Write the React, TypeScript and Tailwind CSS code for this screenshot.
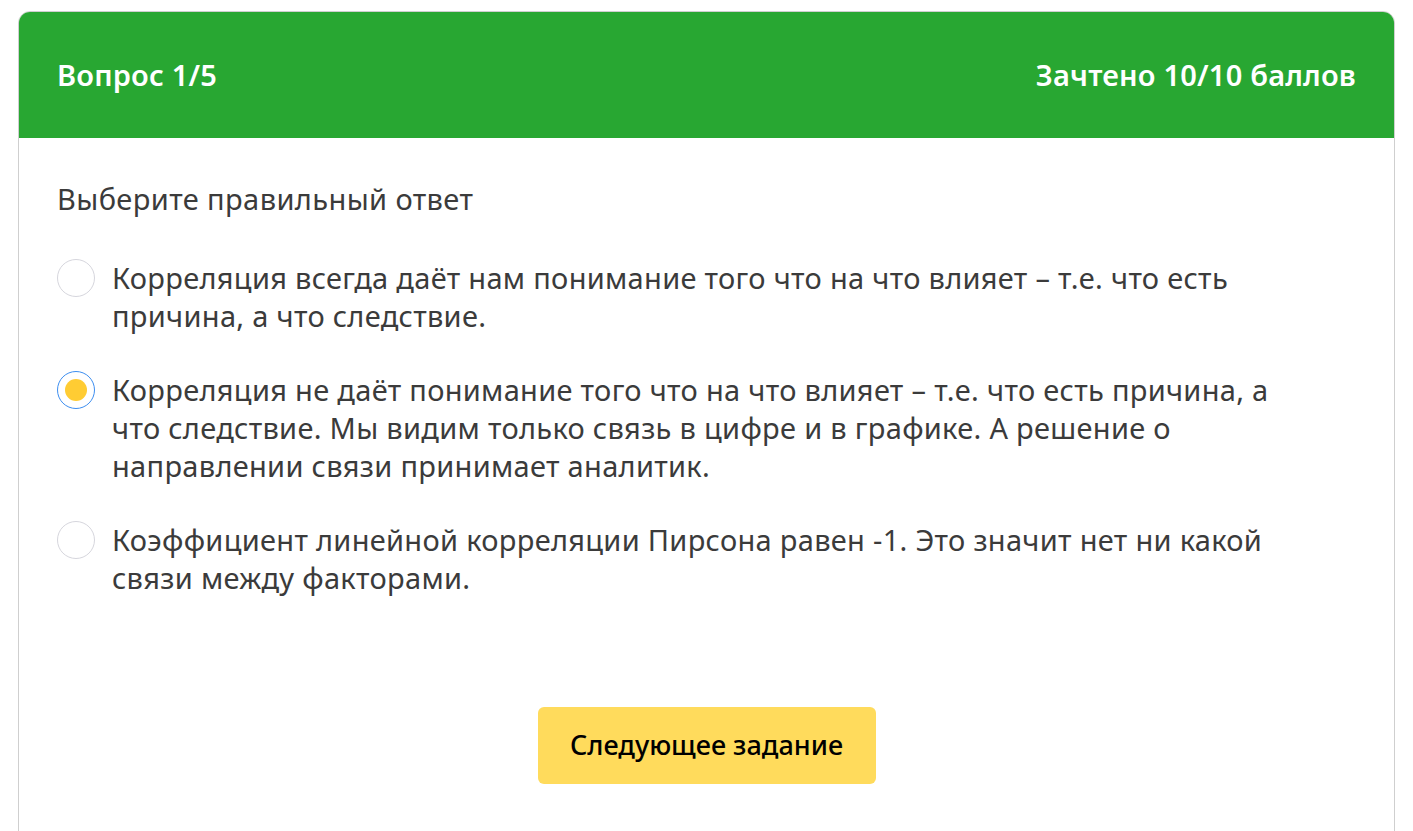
import React from "react";

const options = [
  "Корреляция всегда даёт нам понимание того что на что влияет – т.е. что есть причина, а что следствие.",
  "Корреляция не даёт понимание того что на что влияет – т.е. что есть причина, а что следствие. Мы видим только связь в цифре и в графике. А решение о направлении связи принимает аналитик.",
  "Коэффициент линейной корреляции Пирсона равен -1. Это значит нет ни какой связи между факторами.",
];

export default function App() {
  return (
    <div className="min-h-screen bg-white px-[18px] pt-[11px]" style={{ fontFamily: '"Noto Sans", "Open Sans", sans-serif' }}>
      <div className="rounded-t-[12px] border border-[#cfcfcf] overflow-hidden h-[840px]">
        <div className="h-[126px] bg-[#28a732] flex items-center justify-between px-[38px] text-white text-[29px] tracking-[0.2px] font-semibold">
          <span>Вопрос 1/5</span>
          <span>Зачтено 10/10 баллов</span>
        </div>
        <div className="px-[38px] pt-[43px]">
          <div className="text-[29px] leading-[36px] tracking-[0.4px] text-[#3b3b3b]">Выберите правильный ответ</div>
          <div className="mt-[42px] flex flex-col gap-[36px]">
            {options.map((t, i) => (
              <div key={i} className="flex items-start gap-[17px]">
                <div
                  className={
                    "w-[38px] h-[38px] shrink-0 rounded-full flex items-center justify-center bg-white " +
                    (i === 1 ? "border border-[#3d8ef0]" : "border border-[#d6d6dd]")
                  }
                >
                  {i === 1 && <div className="w-[22px] h-[22px] rounded-full bg-[#ffcc33]" />}
                </div>
                <div className="text-[29px] leading-[38px] tracking-[0.3px] text-[#3b3b3b] max-w-[1180px]">{t}</div>
              </div>
            ))}
          </div>
          <div className="flex justify-center mt-[110px]">
            <button className="w-[338px] h-[77px] rounded-[6px] bg-[#ffdb5c] text-black text-[27px] font-medium">
              Следующее задание
            </button>
          </div>
        </div>
      </div>
    </div>
  );
}
